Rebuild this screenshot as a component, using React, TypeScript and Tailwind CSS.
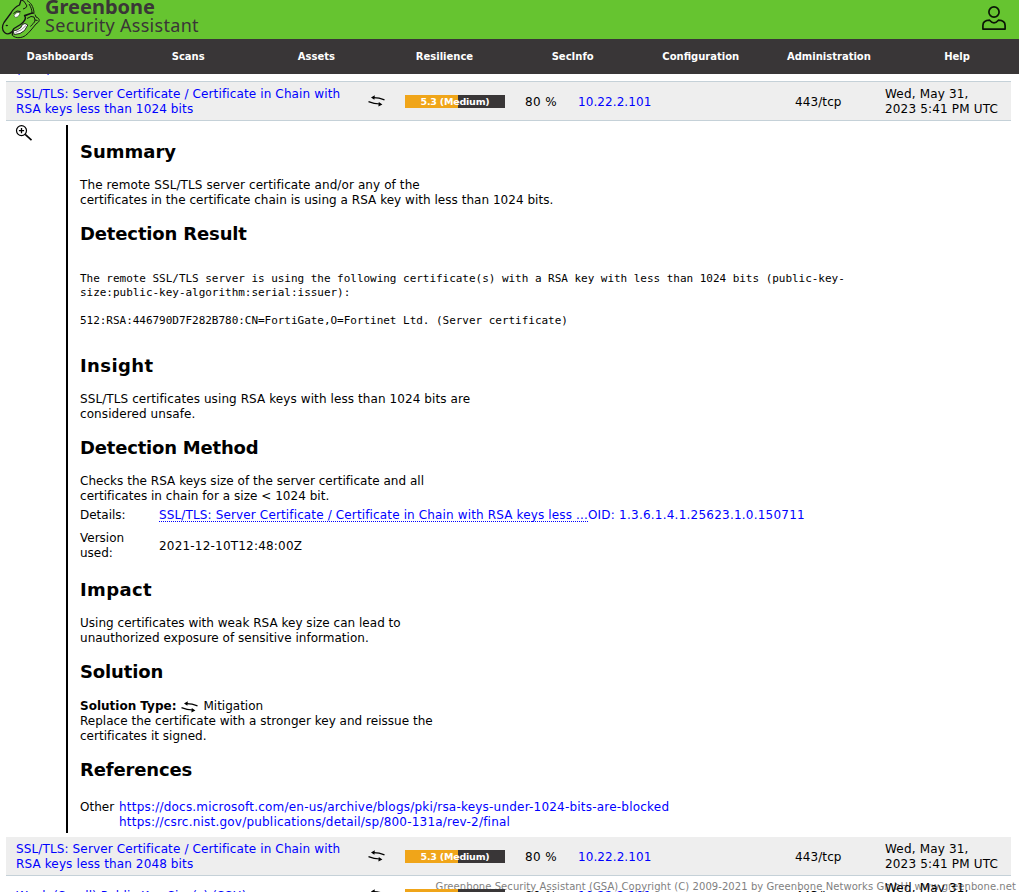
import type { ReactNode } from "react";

const menu = ["Dashboards", "Scans", "Assets", "Resilience", "SecInfo", "Configuration", "Administration", "Help"];

function MitigationIcon() {
  return (
    <svg width="18" height="12" viewBox="0 0 18 12" className="shrink-0" fill="none" stroke="#000" strokeWidth="1.15">
      <path d="M5 2.7Q11 2.6 16.5 4.9M.5 6.6Q6 8.8 12 9" />
      <path d="M3 2.6 6.8.3 6.4 4.8ZM14.4 9.5 10.8 6.9 10.4 11.6Z" fill="#000" stroke="none" />
    </svg>
  );
}

function Logo() {
  return (
    <svg width="42" height="39" viewBox="0 0 42 39" className="shrink-0" fill="none" stroke="#151515" strokeWidth="1" strokeLinejoin="round">
      <path d="M21 0 19.5 5C17 6 13.5 8.5 11 13L4 22.5C1.8 26 2 30.5 4.5 32.5 7 34.5 10 34 12 31.5" strokeWidth="1.3" />
      <path d="M21 0 24 1.2 27 6 25.5 8 23 9M27 .5C31 3 33 6 34 12M29 4C31 7 32 10 32 13" />
      <path d="M34.5 13C31 12.5 28 15 24.5 15.5 27 18.5 24 22 20.5 24.5L14 28.5C12.5 30 12 32 12.5 35.5" strokeWidth="1.4" />
      <path d="M35 14.5 36 17C39 18 40 20 38.5 22L36 24C32.5 28 30 32 25.5 35.5 22 38 16 38.8 12.5 35.5M27 18.5 31 16.5 34 17 35 20 37.5 20.5M35 20C35 23 32 24 30.5 26.5" />
      <path d="M14.3 34.5 13.2 31 17 30 20.5 28 22.5 24.5 25 23.5 27.8 25 24.5 30.5 20 33.5Z" fill="#fff" strokeWidth=".9" />
      <path d="M15.5 32.5Q22 30.5 26 25.5" strokeWidth=".5" />
      <path d="M14 15.8C15 13.2 17 12 20 12.5 19.5 15.5 18 17.3 15.5 17.4Z" fill="#fff" strokeWidth=".5" />
      <path d="M13.5 13.5 17 11 20.5 11.5" />
      <ellipse cx="6.8" cy="25.5" rx="1.2" ry=".8" fill="#151515" stroke="none" />
    </svg>
  );
}

function UserIcon() {
  return (
    <svg width="26" height="26" viewBox="0 0 26 26" fill="none" stroke="#0b1506" strokeWidth="1.7" strokeLinejoin="round">
      <circle cx="13" cy="7" r="5.1" />
      <path d="M1.9 24.1V20.5C1.9 17.2 4.5 15.3 8.6 15.2 10 16.9 11.5 17.8 13 17.8S16 16.9 17.4 15.2C21.5 15.3 24.1 17.2 24.1 20.5V24.1Z" />
    </svg>
  );
}

function ZoomIcon() {
  return (
    <svg width="18" height="18" viewBox="0 0 18 18" fill="none" stroke="#000">
      <circle cx="6.5" cy="5.6" r="5" strokeWidth="1.2" />
      <path d="M6.5 3v5.2M3.9 5.6h5.2" strokeWidth="1.3" />
      <path d="m10.2 9.3 6.3 5.9" strokeWidth="1.6" />
    </svg>
  );
}

function ResultRow({ title, shaded }: { title: ReactNode; shaded?: boolean }) {
  return (
    <div
      className={`mx-[6px] flex h-[39px] w-[1005px] shrink-0 items-center border-b border-[#c5d1d8] ${shaded ? "bg-[#eeeeee]" : ""}`}
    >
      <a className="w-[362px] pt-0.5 pl-[10px] tracking-[0.13px] text-[#0000ff]">{title}</a>
      <div className="w-[37px]">
        <MitigationIcon />
      </div>
      <div className="flex h-[13px] w-[100px] items-center justify-center bg-[linear-gradient(to_right,#f0a519_53%,#393637_53%)] text-[9.5px] leading-[13px] font-bold tracking-[-0.2px] text-white">
        5.3 (Medium)
      </div>
      <div className="w-[73px] pt-0.5 pl-5 tracking-[0.4px]">80 %</div>
      <a className="w-[217px] pt-0.5 tracking-[0.08px] text-[#0000ff]">10.22.2.101</a>
      <div className="w-[90px] pt-0.5 tracking-[0.1px]">443/tcp</div>
      <div className="pt-0.5 tracking-[0.17px] whitespace-nowrap">
        Wed, May 31,
        <br />
        2023 5:41 PM UTC
      </div>
    </div>
  );
}

function Section({ title, tracking, children }: { title: string; tracking?: string; children: ReactNode }) {
  return (
    <section className="mb-[15px]">
      <h2 className={`mb-4 h-[21px] text-[18px] leading-[21px] font-bold ${tracking ?? "tracking-[-0.15px]"}`}>{title}</h2>
      {children}
    </section>
  );
}

export default function App() {
  return (
    <div className="relative flex h-[892px] w-[1019px] flex-col overflow-hidden bg-white font-['DejaVu_Sans',sans-serif] text-[12px] leading-[15px] text-black">
      <header className="flex h-[39px] shrink-0 justify-between bg-[#66c430] pr-3">
        <div className="flex">
          <Logo />
          <div className="-mt-[3px] ml-[3px] font-['Noto_Sans',sans-serif] whitespace-nowrap text-[#3a3637]">
            <div className="h-[18px] text-[20px] leading-[20px] font-bold">Greenbone</div>
            <div className="text-[18px] leading-[21px] tracking-[0.3px]">Security Assistant</div>
          </div>
        </div>
        <div className="pt-[5px]">
          <UserIcon />
        </div>
      </header>
      <nav className="-ml-1 flex h-[35px] w-[1027px] shrink-0 items-center bg-[#393637] text-center text-[10px] font-bold text-white">
        {menu.map((item) => (
          <a key={item} className="w-[128.15px]">
            {item}
          </a>
        ))}
      </nav>
      <footer className="absolute right-[3px] bottom-[-2px] text-[10px] leading-[15px] tracking-[0.07px] whitespace-nowrap text-[#7f7f7f]">
        Greenbone Security Assistant (GSA) Copyright (C) 2009-2021 by Greenbone Networks GmbH, www.greenbone.net
      </footer>
      <main className="relative flex min-h-0 flex-1 flex-col overflow-hidden">
        <div className="mx-[6px] flex h-2 w-[1005px] shrink-0 items-end overflow-hidden border-b border-[#c5d1d8] pb-[3px]">
          <a className="h-[15px] pl-[10px] tracking-[0.3px] text-[#0000ff]">(SSH)</a>
        </div>
        <ResultRow
          shaded
          title={
            <>
              SSL/TLS: Server Certificate / Certificate in Chain with
              <br />
              RSA keys less than 1024 bits
            </>
          }
        />
        <div className="flex h-[716px] shrink-0 py-1">
          <div className="w-[66px] pl-[15px]">
            <ZoomIcon />
          </div>
          <div className="flex-1 border-l-2 border-black pt-4 pl-3">
            <Section title="Summary" tracking="tracking-normal">
              <p className="tracking-[0.03px]">
                <span className="tracking-[0.1px]">The remote SSL/TLS server certificate and/or any of the</span>
                <br />
                certificates in the certificate chain is using a RSA key with less than 1024 bits.
              </p>
            </Section>
            <Section title="Detection Result">
              <pre className="mt-7 mb-[27px] font-['DejaVu_Sans_Mono',monospace] text-[11px] leading-[14px] tracking-[-0.03px]">
                {`The remote SSL/TLS server is using the following certificate(s) with a RSA key with less than 1024 bits (public-key-
size:public-key-algorithm:serial:issuer):

512:RSA:446790D7F282B780:CN=FortiGate,O=Fortinet Ltd. (Server certificate)`}
              </pre>
            </Section>
            <Section title="Insight" tracking="tracking-[0.4px]">
              <p className="tracking-[0.09px]">
                SSL/TLS certificates using RSA keys with less than 1024 bits are
                <br />
                considered unsafe.
              </p>
            </Section>
            <Section title="Detection Method" tracking="tracking-[-0.2px]">
              <p className="tracking-[0.03px]">
                Checks the RSA keys size of the server certificate and all
                <br />
                certificates in chain for a size &lt; 1024 bit.
              </p>
              <div className="mt-1 grid grid-cols-[79px_1fr] items-center gap-y-2 pb-[3px]">
                <div>Details:</div>
                <div className="flex whitespace-nowrap text-[#0000ff]">
                  <a className="h-[14px] border-b border-dotted border-[#0000ff] tracking-[0.14px]">
                    SSL/TLS: Server Certificate / Certificate in Chain with RSA keys less ...
                  </a>
                  <a className="tracking-[0.23px]">OID: 1.3.6.1.4.1.25623.1.0.150711</a>
                </div>
                <div>
                  Version
                  <br />
                  used:
                </div>
                <div className="tracking-[0.2px]">2021-12-10T12:48:00Z</div>
              </div>
            </Section>
            <Section title="Impact" tracking="tracking-[0.35px]">
              <p className="tracking-[0.02px]">
                Using certificates with weak RSA key size can lead to
                <br />
                unauthorized exposure of sensitive information.
              </p>
            </Section>
            <Section title="Solution">
              <div className="mt-[17px] flex h-[15px] items-center">
                <b>Solution Type:</b>
                <span className="mr-1 ml-[5px]">
                  <MitigationIcon />
                </span>
                <span>Mitigation</span>
              </div>
              <p className="tracking-[0.02px]">
                Replace the certificate with a stronger key and reissue the
                <br />
                certificates it signed.
              </p>
            </Section>
            <Section title="References">
              <div className="mt-5 flex">
                <div className="w-[39px]">Other</div>
                <div className="flex flex-col tracking-[0.21px] text-[#0000ff]">
                  <a>https://docs.microsoft.com/en-us/archive/blogs/pki/rsa-keys-under-1024-bits-are-blocked</a>
                  <a>https://csrc.nist.gov/publications/detail/sp/800-131a/rev-2/final</a>
                </div>
              </div>
            </Section>
          </div>
        </div>
        <ResultRow
          shaded
          title={
            <>
              SSL/TLS: Server Certificate / Certificate in Chain with
              <br />
              RSA keys less than 2048 bits
            </>
          }
        />
        <ResultRow title="Weak (Small) Public Key Size(s) (SSH)" />
      </main>
    </div>
  );
}
